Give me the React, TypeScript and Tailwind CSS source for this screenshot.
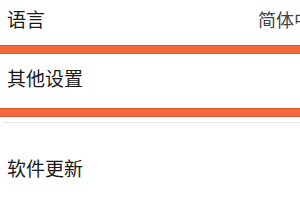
import React from 'react';

const font = { fontFamily: '"Noto Sans CJK SC", "Noto Sans", sans-serif' };

const Row = ({ label, value, className }: { label: string; value?: string; className: string }) => (
    <div className={`flex items-center justify-between pl-[7px] bg-white ${className}`}>
        <span className="text-[19px] leading-none text-[#1a1a1a]">{label}</span>
        {value && <span className="text-[18px] leading-none text-[#444] whitespace-nowrap -mr-[30px]">{value}</span>}
    </div>
);

const Divider = () => (
    <div className="h-[9px] bg-[#f56a3d] border-y border-[#d9582f]" />
);

export default function App() {
    return (
        <div className="w-[300px] h-[200px] overflow-hidden bg-white" style={font}>
            <Row label="语言" value="简体中文" className="h-[45px] pb-[8px]" />
            <Divider />
            <Row label="其他设置" className="h-[54px] pb-[7px]" />
            <Divider />
            <div className="h-[5px]" />
            <div className="h-px bg-[#e6e6e6] ml-[3px]" />
            <Row label="软件更新" className="h-[88px]" />
        </div>
    );
}
